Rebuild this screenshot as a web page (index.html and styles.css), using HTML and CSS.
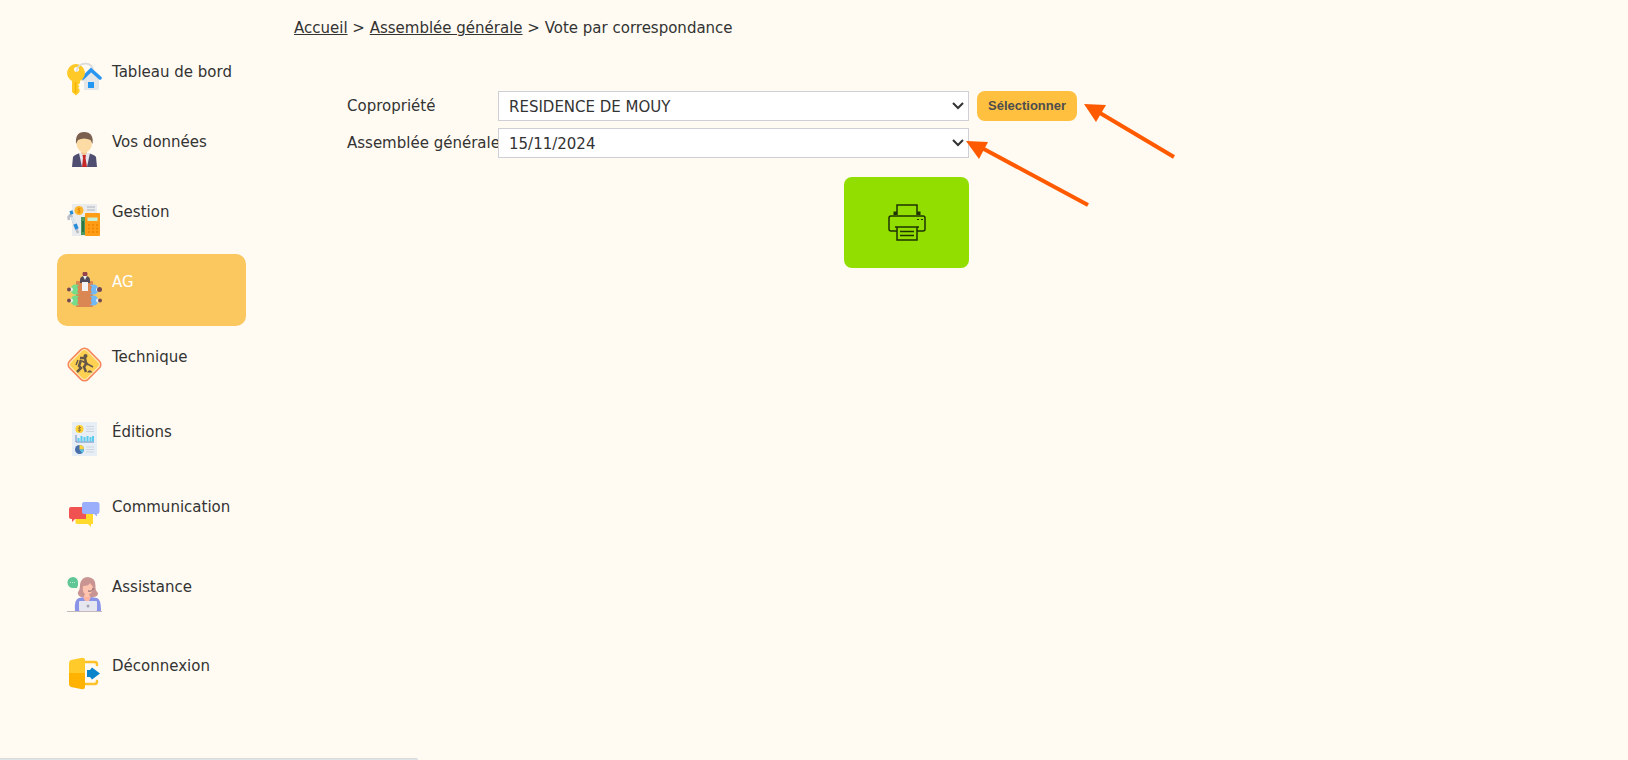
FILE: index.html
```html
<!DOCTYPE html>
<html lang="fr">
<head>
    <meta charset="UTF-8">
    <meta name="viewport" content="width=device-width, initial-scale=1.0">
    <title>Vote par correspondance</title>
    <link rel="stylesheet" href="styles.css">
</head>
<body>

<div class="page">

    <!-- Menu principal -->
    <nav class="menu">
        <div class="menu-group">
            <a href="#" class="menu-item">
                <svg class="menu-icon" viewBox="0 0 35 35">
                    <circle cx="18" cy="10" r="8.500" fill="none" stroke="#dcdcdc" stroke-width="1.500"/>
                    <path d="M17 16 L24 9 L32 16 V26 Q32 28 30 28 H17 Z" fill="#e4e6e8"/>
                    <path d="M16 16 L24 8 L33 16" fill="none" stroke="#2a96f0" stroke-width="3.500" stroke-linecap="round"/>
                    <rect x="21" y="20" width="6" height="6" fill="#2196f3"/>
                    <path d="M9 2 A9 9 0 0 0 5 19 V30 L9 33.500 L12.500 30 V27 L11 26 L12.500 24.500 L11 23 L13 21 V19 A9 9 0 0 0 9 2 Z M9.500 5 A2.500 2.500 0 1 1 9.400 5 Z" fill="#ffca28" fill-rule="evenodd"/>
                    <path d="M8.500 20 V31" stroke="#f4b400" stroke-width="1.500"/>
                    <path d="M10 6 C15 0 23 0 26 6" fill="none" stroke="#dcdcdc" stroke-width="1.500"/>
                </svg>
                <span>Tableau de bord</span>
            </a>
            <a href="#" class="menu-item">
                <svg class="menu-icon" viewBox="0 0 35 35">
                    <path d="M5 35 L6 25 Q7 23 13 21 H21 Q28 23 29 25 L30 35 Z" fill="#4f4d70"/>
                    <path d="M12 21 L15 35 H20 L23 21 Z" fill="#e6e6ee"/>
                    <path d="M14 17 H20 V21 L17 24 L14 21 Z" fill="#f0c48f"/>
                    <path d="M15.500 23 H19 L18.500 26 L20 35 H15 L16 26 Z" fill="#c62828"/>
                    <path d="M9.500 11 A7.500 7 0 0 1 25 11 Q25 17 20 20 Q17 22 14.500 20 Q9.500 17 9.500 11 Z" fill="#fddba5"/>
                    <path d="M9 12 Q8 0 17 0 Q27 0 25.500 12 L23.500 8 Q17 5 11 8 Z" fill="#7b6050"/>
                </svg>
                <span>Vos données</span>
            </a>
            <a href="#" class="menu-item">
                <svg class="menu-icon" viewBox="0 0 35 35">
                    <rect x="5" y="2" width="25" height="32" fill="#e9ebed"/>
                    <path d="M20 5 H28 M20 8 H28" stroke="#c2c6cb" stroke-width="1.500"/>
                    <circle cx="12" cy="8.500" r="4.500" fill="#fdb62f"/>
                    <path d="M13.500 6.500 Q10.500 6 11 8 Q14 8.500 13 10 Q12 11 10.500 10 M12 5.500 V11.500" stroke="#f08c00" fill="none"/>
                    <rect x="14" y="15" width="6" height="18" fill="#4d9a61"/>
                    <path d="M16 19 V30" stroke="#2f7446" stroke-width="2"/>
                    <rect x="18" y="11" width="15" height="23" rx="1" fill="#ff9e16"/>
                    <rect x="20.500" y="15.500" width="10" height="3.500" fill="#c9f0d2"/>
                    <path d="M21 23 H31 M21 26.500 H31 M21 30 H31" stroke="#f08a00" stroke-width="2" stroke-dasharray="2 2"/>
                    <path d="M2 18 L1.500 15 L4 12 M4 13 L11 31" stroke="#b9bec7" stroke-width="2.500" fill="none"/>
                    <path d="M3 11 L6 10 M8 22 L10 27" stroke="#268dd9" stroke-width="3.500"/>
                    <path d="M5 15 L8 22" stroke="#dce6ef" stroke-width="3"/>
                </svg>
                <span>Gestion</span>
            </a>
            <a href="#" class="menu-item menu-item-active">
                <svg class="menu-icon" viewBox="0 0 35 35">
                    <rect x="9" y="9" width="17" height="26" rx="1" fill="#da8754"/>
                    <path d="M13 11 V8 Q13 4 18 4 Q23 4 23 8 V11 Z" fill="#514b59"/>
                    <circle cx="18" cy="2" r="2.500" fill="#95444b"/>
                    <path d="M16 4 H20 L18 8 Z" fill="#eee"/>
                    <rect x="15" y="10" width="6" height="9" fill="#f1f1f3"/>
                    <path d="M12 13 Q4 11 4 17.500 Q4 24 12 22 L10 20 V15 Z M12 24 Q4 22 4 28.500 Q4 35 12 33 L10 31 V26 Z" fill="#75dc8b"/>
                    <path d="M23 13 Q31 11 31 17.500 Q31 24 23 22 L25 20 V15 Z M23 24 Q31 22 31 28.500 Q31 35 23 33 L25 31 V26 Z" fill="#72b8f5"/>
                    <g fill="#75dc8b"><circle cx="7.500" cy="17.500" r="3.500"/><circle cx="7.500" cy="28.500" r="3.500"/></g>
                    <g fill="#72b8f5"><circle cx="27.500" cy="17.500" r="3.500"/><circle cx="27.500" cy="28.500" r="3.500"/></g>
                    <g fill="#f1eee9"><circle cx="4" cy="17.500" r="2"/><circle cx="4" cy="28.500" r="2"/><circle cx="31" cy="17.500" r="2"/><circle cx="31" cy="28.500" r="2"/></g>
                    <g fill="#754950"><circle cx="2" cy="17.500" r="2"/><circle cx="2" cy="28.500" r="2"/><circle cx="32.500" cy="17.500" r="2.500"/><circle cx="33" cy="28.500" r="2"/></g>
                </svg>
                <span>AG</span>
            </a>
        </div>

        <div class="menu-group menu-group-middle">
            <a href="#" class="menu-item">
                <svg class="menu-icon" viewBox="0 0 35 35">
                    <rect x="4.500" y="4.500" width="26" height="26" rx="5" transform="rotate(45 17.500 17.500)" fill="#ffe9b2" stroke="#f5865c" stroke-width="1.500"/>
                    <rect x="6.500" y="6.500" width="22" height="22" rx="3" transform="rotate(45 17.500 17.500)" fill="#ffd152"/>
                    <circle cx="18.500" cy="9" r="2" fill="#655849"/>
                    <path d="M13 11 L18 11 L19 17 L17 20 L19 25 M14 13 L12 19 L14 21 L10 25" stroke="#655849" stroke-width="2.500" fill="none"/>
                    <path d="M11 13 L9 18 M15 14 L26 20 M18 13 L21 18" stroke="#655849" stroke-width="1.500" fill="none"/>
                    <path d="M20 25.500 Q22.500 21 25.500 25.500 Z" fill="#655849"/>
                </svg>
                <span>Technique</span>
            </a>
            <a href="#" class="menu-item">
                <svg class="menu-icon" viewBox="0 0 35 35">
                    <rect x="5" y="0" width="25" height="34" fill="#e8eef5"/>
                    <circle cx="12.500" cy="7" r="4" fill="#ffd02f"/>
                    <path d="M14 5.500 Q11 5 11.500 7 Q14 7 13.500 8.500 Q12.500 9.500 11 8.500 M12.500 4 V10" stroke="#a1843d" fill="none"/>
                    <path d="M19 4.500 H27 M19 7 H27 M19 9.500 H27 M19 25 H27 M19 27.500 H27 M19 30 H27" stroke="#d0d6df"/>
                    <path d="M9 13 V20 H27" stroke="#6884bd" fill="none"/>
                    <path d="M11.500 19.500 V16 M14.500 19.500 V14 M17.500 19.500 V15 M20.500 19.500 V14 M23.500 19.500 V15 M26 19.500 V14" stroke="#5acbed" stroke-width="2"/>
                    <circle cx="12.500" cy="27.500" r="4.500" fill="#496fab"/>
                    <path d="M12.500 27.500 V23 A4.500 4.500 0 0 1 17 27.500 Z" fill="#ffd33b"/>
                    <path d="M12.500 27.500 H17 A4.500 4.500 0 0 1 15 31 Z" fill="#59c8e8"/>
                </svg>
                <span>Éditions</span>
            </a>
            <a href="#" class="menu-item">
                <svg class="menu-icon" viewBox="0 0 35 35">
                    <path d="M10 17 H26 V27 H24 V30 L21 27 H10 Q8.500 27 8.500 25 V17 Z" fill="#ffda2d"/>
                    <path d="M4 10 H19 V22 H8 L5 25 V22 H4 Q2 22 2 20 V12 Q2 10 4 10 Z" fill="#f05151"/>
                    <path d="M17 5 H30 Q32.500 5 32.500 7 V15 Q32.500 17 30 17 V19.500 L27 17 H17 Q15 17 15 15 V7 Q15 5 17 5 Z" fill="#9baefb"/>
                </svg>
                <span>Communication</span>
            </a>
        </div>

        <div class="menu-group menu-group-last">
            <a href="#" class="menu-item">
                <svg class="menu-icon" viewBox="0 0 35 35">
                    <path d="M6 0 A5.500 5.500 0 1 0 6 11 H10 L11 8 V5 A5.500 5.500 0 0 0 6 0 Z" fill="#61c696"/>
                    <path d="M3 5.500 H9" stroke="#b8edcd" stroke-dasharray="1 1"/>
                    <path d="M13 8 Q14 0 21 0 Q29 1 28.500 9 Q28 13 31 16 Q31 20 26 20 H14 Q10 18 11 15 Q13 13 13 8 Z" fill="#c99491"/>
                    <path d="M16 9 Q22 9 23 6 L26 10 Q26 16 22 17 L24 22 H16 L18 17 Q15 15 16 9 Z" fill="#ffc4af"/>
                    <path d="M26 11 Q26 15 21 14" stroke="#765a66" fill="none"/>
                    <path d="M8 34 Q7 22 12 21 L17 20 H24 L30 21 Q34 22 34 34 Z" fill="#8993e8"/>
                    <path d="M16 20 H24 L22 24 H18 Z" fill="#ffb5a1"/>
                    <rect x="12" y="24" width="18" height="10" rx="1" fill="#e5e6ef"/>
                    <circle cx="21" cy="29" r="1.500" fill="#a3a4b2"/>
                    <path d="M0 34.500 H35" stroke="#c5b9bb"/>
                </svg>
                <span>Assistance</span>
            </a>
            <a href="#" class="menu-item">
                <svg class="menu-icon" viewBox="0 0 35 35">
                    <path d="M18 6 H28 Q30 6 30 9 M18 28 H28 Q30 28 30 25" stroke="#ffc12a" stroke-width="2.500" fill="none" stroke-linecap="round"/>
                    <path d="M2 17 V7 Q2 5 4 4 L14 2 Q18 1 18 4 V17 Z" fill="#ffca2a"/>
                    <path d="M2 17 V28 Q2 30 4 31 L14 33 Q18 34 18 31 V17 Z" fill="#ffb300"/>
                    <path d="M20 14 H23 L25 11.500 L33 17.500 L25 23.500 L23 21 H20 Z" fill="#0984cb"/>
                </svg>
                <span>Déconnexion</span>
            </a>
        </div>
    </nav>

    <main class="content">
        <div class="breadcrumb">
            <a href="#">Accueil</a> &gt; <a href="#">Assemblée générale</a> &gt; Vote par correspondance
        </div>

        <form class="vote-form">
            <div class="form-row">
                <label for="copropriete">Copropriété</label>
                <select id="copropriete">
                    <option>RESIDENCE DE MOUY</option>
                </select>
                <button type="button" class="btn-select">Sélectionner</button>
            </div>
            <div class="form-row">
                <label for="assemblee">Assemblée générale</label>
                <select id="assemblee">
                    <option>15/11/2024</option>
                </select>
            </div>
            <div class="form-actions">
                <button type="button" class="btn-print" aria-label="Imprimer">
                    <svg class="print-icon" viewBox="0 0 38 38" fill="none" stroke="#1e3300" stroke-width="1.500">
                        <path d="M9 11 V1 H29 V11"/>
                        <path d="M7 11 V9 H9 M31 11 V9 H29" stroke-width="3"/>
                        <path d="M9 27 H3 Q1 27 1 25 V14 Q1 12 3 12 H35 Q37 12 37 14 V25 Q37 27 35 27 H29"/>
                        <path d="M7 23 H31 M9 23 V36 H29 V23"/>
                        <path d="M12 27.500 H26 M12 31.500 H26"/>
                        <path d="M29 15.500 H31 M33 15.500 H35" stroke-width="1"/>
                    </svg>
                </button>
            </div>

            <!-- Flèches d'aide -->
            <svg class="arrows" viewBox="0 0 210 106" fill="#ff5a00" stroke="#ff5a00">
                <path d="M134 17 L208 61" stroke-width="4"/>
                <path d="M118 8 L140 9 L130 26 Z" stroke="none"/>
                <path d="M16 52 L122 109" stroke-width="4"/>
                <path d="M0 45 L22 46 L13 63 Z" stroke="none"/>
            </svg>
        </form>
    </main>

</div>

<div class="status-bar"></div>

</body>
</html>
```
FILE: styles.css
```css
body {
    margin: 0;
    background-color: #fffbf2;
    color: #333;
    font-family: Verdana, "DejaVu Sans", sans-serif;
    font-size: 15px;
    line-height: 20px;
}

.page {
    display: flex;
    padding: 0 57px;
    gap: 48px;
}

/* Menu */
.menu {
    flex: 0 0 189px;
    padding-top: 44px;
}

.menu-group {
    display: flex;
    flex-direction: column;
}

.menu-group-middle {
    gap: 5px;
    margin-top: 3px;
}

.menu-group-last {
    gap: 9px;
    margin-top: 10px;
}

.menu-item {
    display: flex;
    align-items: flex-start;
    gap: 10px;
    box-sizing: border-box;
    height: 70px;
    padding: 18px 10px;
    border-radius: 10px;
    color: #333;
    text-decoration: none;
}

.menu-item-active {
    height: 72px;
    background-color: #fbc75f;
    color: #fff;
}

.menu-icon {
    flex: none;
    width: 35px;
    height: 35px;
}

/* Contenu */
.content {
    flex: 1;
    min-width: 0;
    padding-top: 18px;
}

.breadcrumb a {
    color: #333;
    text-decoration: underline;
}

.vote-form {
    position: relative;
    display: flex;
    flex-direction: column;
    gap: 7px;
    max-width: 830px;
    margin: 53px 0 0 53px;
}

.form-row {
    display: flex;
    align-items: center;
}

.form-row label {
    flex: none;
    width: 151px;
    white-space: nowrap;
}

.form-row select {
    appearance: none;
    box-sizing: border-box;
    width: 471px;
    height: 30px;
    padding: 2px 30px 0 10px;
    border: 1px solid #ced0d6;
    border-radius: 0;
    background: #fff url("data:image/svg+xml,%3Csvg xmlns='http://www.w3.org/2000/svg' width='12' height='8' viewBox='0 0 12 8'%3E%3Cpath d='M1 1 L6 6 L11 1' fill='none' stroke='%23333' stroke-width='2'/%3E%3C/svg%3E") no-repeat right 4px center;
    color: #333;
    font-family: inherit;
    font-size: 15px;
}

.btn-select {
    width: 100px;
    height: 30px;
    margin-left: 8px;
    padding: 0 0 2px;
    border: none;
    border-radius: 8px;
    background-color: #ffc040;
    color: #4d4d4d;
    font-family: Arial, "Liberation Sans", sans-serif;
    font-size: 13px;
    font-weight: bold;
    cursor: pointer;
}

.form-actions {
    display: flex;
    justify-content: flex-end;
    width: 622px;
    margin-top: 12px;
}

.btn-print {
    display: flex;
    align-items: center;
    justify-content: center;
    width: 125px;
    height: 91px;
    padding: 0;
    border: none;
    border-radius: 8px;
    background-color: #91de00;
    cursor: pointer;
}

.print-icon {
    width: 38px;
    height: 38px;
}

.arrows {
    position: absolute;
    top: 5px;
    left: 619px;
    width: 210px;
    height: 106px;
    overflow: visible;
    pointer-events: none;
}

/* Barre d'état */
.status-bar {
    position: fixed;
    left: 0;
    bottom: 0;
    box-sizing: border-box;
    width: 418px;
    height: 2px;
    border-top: 1px solid #ded9d4;
    border-top-right-radius: 4px;
    background-color: #dce5ec;
}
```
